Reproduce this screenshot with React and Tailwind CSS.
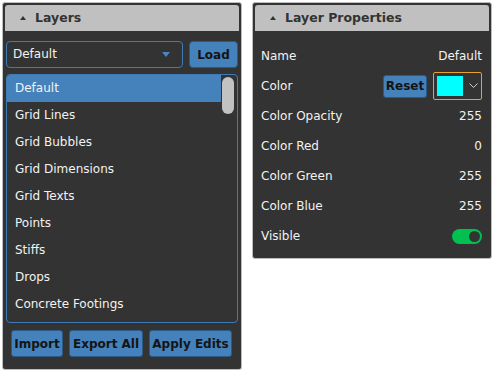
import { useState } from "react";

const layers = [
  "Default",
  "Grid Lines",
  "Grid Bubbles",
  "Grid Dimensions",
  "Grid Texts",
  "Points",
  "Stiffs",
  "Drops",
  "Concrete Footings",
];

function PanelHeader({ title }) {
  return (
    <div className="mx-[2px] mt-[2px] h-[26px] rounded-t-[3px] bg-[#c0c0c0] flex items-center pl-[15px] gap-[9px]">
      <span className="w-0 h-0 border-l-[3px] border-r-[3px] border-b-[4px] border-l-transparent border-r-transparent border-b-[#333]" />
      <span className="font-bold text-[12.5px] text-[#333]">{title}</span>
    </div>
  );
}

function Row({ label, children }) {
  return (
    <div className="h-[30px] flex items-center justify-between pl-[8px] pr-[9px] text-[#f2f2f2]">
      <span>{label}</span>
      {children}
    </div>
  );
}

export default function App() {
  const [selected, setSelected] = useState("Default");
  const [visible, setVisible] = useState(true);

  return (
    <div
      className="w-[498px] h-[372px] bg-white flex gap-[10px] pl-[2px] pt-[2px] text-[12px]"
      style={{ fontFamily: '"DejaVu Sans", Verdana, sans-serif' }}
    >
      {/* Layers panel */}
      <div className="w-[240px] h-[368px] bg-[#333333] border border-[#bdbdbd] rounded-[3px] flex flex-col">
        <PanelHeader title="Layers" />

        <div className="flex gap-[6px] mt-[10px] ml-[3px] mr-[3px]">
          <div className="flex-1 h-[27px] border border-[#3d7ab8] rounded-[4px] flex items-center justify-between pl-[6px] pr-[12px] pb-[1px] text-[#f2f2f2]">
            <span>Default</span>
            <span className="w-0 h-0 border-l-[4px] border-r-[4px] border-t-[5px] border-l-transparent border-r-transparent border-t-[#4a86c0]" />
          </div>
          <button className="w-[49px] h-[27px] rounded-[4px] bg-[#4581ba] border border-[#2a5a88] text-[#141414] font-bold">
            Load
          </button>
        </div>

        <div className="relative mt-[6px] ml-[3px] mr-[3px] h-[249px] border border-[#3d7ab8] rounded-[4px] overflow-hidden">
          {layers.map((l) => (
            <div
              key={l}
              onClick={() => setSelected(l)}
              className={`h-[27px] flex items-center pl-[8px] pb-[1px] text-[#f2f2f2] ${
                selected === l ? "bg-[#4581ba] mr-[16px]" : ""
              }`}
            >
              {l}
            </div>
          ))}
          <div className="absolute right-[3px] top-[2px] w-[12px] h-[37px] rounded-[6px] bg-[#c2c2c2]" />
        </div>

        <div className="flex gap-[6px] mt-[7px] ml-[8px]">
          <button className="h-[27px] w-[52px] rounded-[3px] bg-[#4581ba] border border-[#2a5a88] text-[#141414] font-bold">
            Import
          </button>
          <button className="h-[27px] w-[74px] rounded-[3px] bg-[#4581ba] border border-[#2a5a88] text-[#141414] font-bold">
            Export All
          </button>
          <button className="h-[27px] w-[83px] rounded-[3px] bg-[#4581ba] border border-[#2a5a88] text-[#141414] font-bold">
            Apply Edits
          </button>
        </div>
      </div>

      {/* Layer Properties panel */}
      <div className="w-[240px] h-[257px] bg-[#333333] border border-[#bdbdbd] rounded-[3px] flex flex-col">
        <PanelHeader title="Layer Properties" />
        <div className="mt-[10px] flex flex-col">
          <Row label="Name">
            <span>Default</span>
          </Row>
          <Row label="Color">
            <div className="flex items-center gap-[6px]">
              <button className="h-[23px] w-[44px] rounded-[3px] bg-[#4581ba] border border-[#2a5a88] text-[#141414] font-bold">
                Reset
              </button>
              <div className="w-[49px] h-[28px] border border-[#e8a030] rounded-[2px] flex items-center pl-[3px] gap-[6px]">
                <div className="w-[26px] h-[20px] bg-[#00ffff]" />
                <svg width="9" height="6" viewBox="0 0 9 6" fill="none">
                  <path d="M0.5 0.5 L4.5 4.5 L8.5 0.5" stroke="#cfcfcf" strokeWidth="1" />
                </svg>
              </div>
            </div>
          </Row>
          <Row label="Color Opacity">
            <span>255</span>
          </Row>
          <Row label="Color Red">
            <span>0</span>
          </Row>
          <Row label="Color Green">
            <span>255</span>
          </Row>
          <Row label="Color Blue">
            <span>255</span>
          </Row>
          <Row label="Visible">
            <button
              onClick={() => setVisible(!visible)}
              className={`w-[30px] h-[15px] rounded-full flex items-center px-[2px] ${
                visible ? "bg-[#00c050] justify-end" : "bg-[#777] justify-start"
              }`}
            >
              <span className="w-[11px] h-[11px] rounded-full bg-[#333]" />
            </button>
          </Row>
        </div>
      </div>
    </div>
  );
}
